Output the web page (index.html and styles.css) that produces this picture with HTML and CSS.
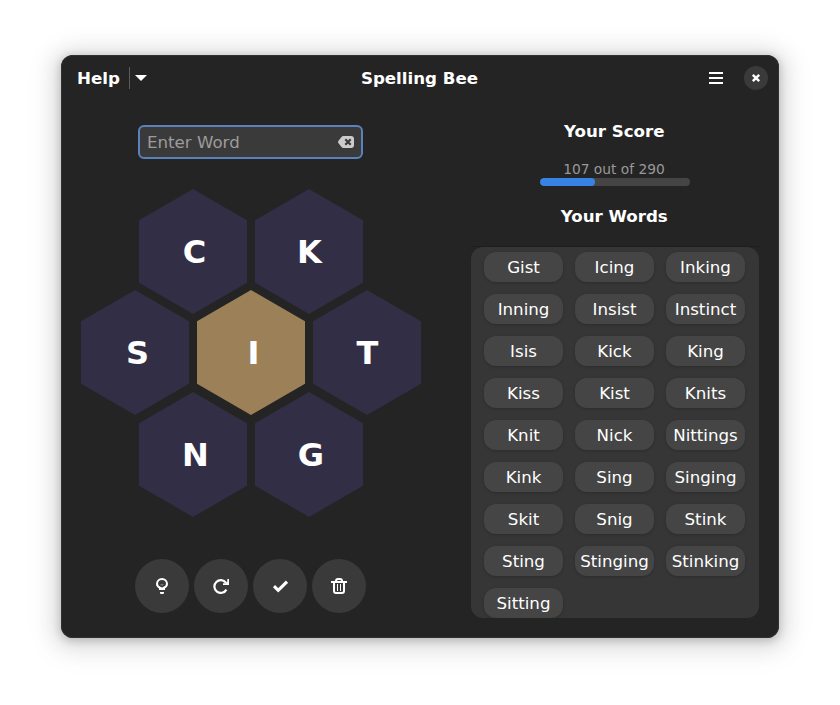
FILE: index.html
```html
<!DOCTYPE html>
<html lang="en">
<head>
<meta charset="utf-8">
<title>Spelling Bee</title>
<link rel="stylesheet" href="styles.css">
</head>
<body>
<main class="window">
  <header class="titlebar">
    <div class="help"><span class="help-label">Help</span><span class="divider"></span><svg class="caret" width="12" height="6" viewBox="0 0 12 6"><path d="M0 0h12L6 6z"/></svg></div>
    <h1>Spelling Bee</h1>
    <div class="controls">
      <svg width="14" height="12" viewBox="0 0 14 12"><path d="M0 0h14v2H0zM0 5h14v2H0zM0 10h14v2H0z"/></svg>
      <button class="close" aria-label="Close"><svg width="10" height="10" viewBox="0 0 10 10"><path class="line" d="M1.800 1.800l6.400 6.400M8.200 1.800l-6.400 6.400"/></svg></button>
    </div>
  </header>
  <div class="content">
    <section class="game">
      <div class="entry"><span>Enter Word</span><svg width="16" height="12" viewBox="0 0 16 12"><path class="clear" d="M5.500 0H13a3 3 0 0 1 3 3v6a3 3 0 0 1-3 3H5.500Q4.300 12 3.500 11L.5 7.300Q-.4 6 .5 4.700L3.500 1Q4.300 0 5.500 0z"/><path class="clear-x" d="M7.300 3.300l5.400 5.400M12.700 3.300l-5.400 5.400"/></svg></div>
      <div class="hive">
        <div class="row"><div class="hex"><span>C</span></div><div class="hex"><span class="k">K</span></div></div>
        <div class="row"><div class="hex"><span class="s">S</span></div><div class="hex center"><span class="i">I</span></div><div class="hex"><span class="t">T</span></div></div>
        <div class="row last"><div class="hex"><span class="n">N</span></div><div class="hex"><span class="g">G</span></div></div>
      </div>
      <div class="actions">
        <button aria-label="Hint"><svg width="16" height="16" viewBox="0 0 16 16"><path class="line" d="M6.500 11V10C4 8.900 3 7.700 3 6a5 5 0 0 1 10 0c0 1.700-1 2.900-3.500 4v1z"/><path d="M5 9.500h6V12H5zM6 14h4v1q0 1-1 1H7q-1 0-1-1z"/><path class="dim" d="M6 6h4L8 8z"/></svg></button>
        <button aria-label="Shuffle"><svg width="16" height="16" viewBox="0 0 16 16"><path class="line bold" d="M13 4.800A6.400 6.400 0 1 0 13.400 11.600"/><path d="M16 1v6h-6V5.200h2.600L14.300 3.500V1z"/></svg></button>
        <button aria-label="Submit"><svg width="16" height="16" viewBox="0 0 16 16"><path class="check" d="M2 8.200l4.200 4.100L15 3.700"/></svg></button>
        <button aria-label="Delete"><svg width="16" height="16" viewBox="0 0 16 16"><path class="line" d="M3 5v8q0 2 2 2h6q2 0 2-2V5M0 4h16M5 4V3q0-2 2-2h2q2 0 2 2v1"/><path d="M6 6h1v7H6zM9 6h1v7H9z"/></svg></button>
      </div>
    </section>
    <section class="results">
      <h2>Your Score</h2>
      <p class="score">107 out of 290</p>
      <div class="progress"><div class="bar"></div></div>
      <h2 class="words-title">Your Words</h2>
      <div class="list-edge">
        <ul class="words"><li>Gist</li><li>Icing</li><li>Inking</li><li>Inning</li><li>Insist</li><li>Instinct</li><li>Isis</li><li>Kick</li><li>King</li><li>Kiss</li><li>Kist</li><li>Knits</li><li>Knit</li><li>Nick</li><li>Nittings</li><li>Kink</li><li>Sing</li><li>Singing</li><li>Skit</li><li>Snig</li><li>Stink</li><li>Sting</li><li>Stinging</li><li>Stinking</li><li>Sitting</li></ul>
      </div>
    </section>
  </div>
</main>
</body>
</html>
```
FILE: styles.css
```css
* { box-sizing: border-box; }
body {
  margin: 0;
  padding: 55px 61px 0;
  height: 705px;
  overflow: hidden;
  background: #fff;
  color: #fff;
  font: 16.65px/20px "DejaVu Sans", sans-serif;
}
h1, h2, p, ul { margin: 0; padding: 0; font-size: 16.65px; line-height: 20px; text-align: center; }
svg { display: block; fill: #fff; }
button { border: 0; padding: 0; background: #3a3a3a; border-radius: 50%; display: grid; place-items: center; }
.line { fill: none; stroke: #fff; stroke-width: 2; }
.line.bold { stroke-width: 2.2; }
.window {
  width: 718px;
  height: 583px;
  border-radius: 12px;
  background: #242424;
  box-shadow: inset 0 0 0 1px #303131, 0 2px 8px 1px rgba(0,0,0,.18), 0 3px 20px 8px rgba(0,0,0,.1), 0 4px 32px 14px rgba(0,0,0,.035);
}
.titlebar { height: 46px; display: grid; grid-template-columns: 1fr auto 1fr; align-items: center; padding: 0 11px 0 16px; }
.titlebar h1 { padding: 2px 6px 0 0; }
.help { display: flex; align-items: center; font-weight: bold; }
.help-label { width: 52px; padding-top: 2px; }
.divider { width: 1px; height: 22px; background: #5c5c5c; margin-right: 5px; }
.controls { display: flex; justify-content: flex-end; align-items: center; gap: 21px; }
.close { width: 24px; height: 24px; }
.close .line { stroke-width: 2.4; }
.content { display: grid; grid-template-columns: 340px 288px; gap: 50px; padding: 0 20px; }
.game { display: flex; flex-direction: column; align-items: center; padding-top: 24px; }
.entry {
  width: 225px;
  height: 34px;
  margin-right: 1px;
  padding: 0 7px;
  border: 2px solid #5a83bd;
  border-radius: 6px;
  background: #3a3a3a;
  color: #9c9c9c;
  display: flex;
  align-items: center;
  justify-content: space-between;
}
.entry span { padding-top: 2px; }
.clear { fill: #ccc; }
.clear-x { stroke: #3a3a3a; stroke-width: 2.2; }
.hive { margin-top: 30px; }
.row { display: flex; justify-content: center; gap: 8px; }
.row + .row { margin-top: -24px; }
.row.last { margin-top: -23px; }
.hex {
  width: 108px;
  height: 125px;
  clip-path: polygon(50% 0, 100% 25%, 100% 75%, 50% 100%, 0 75%, 0 25%);
  background: #312e46;
  display: grid;
  place-items: center;
  font: bold 32px/38px "DejaVu Sans", sans-serif;
}
.hex.center { background: #9c8058; }
.hex span { padding-left: 3px; }
.hex .k, .hex .t { padding-left: 1px; }
.hex .s, .hex .i, .hex .n { padding-left: 5px; }
.hex .g { padding-left: 4px; }
.actions { display: flex; gap: 5px; margin: 42px 1px 0 0; }
.actions button { width: 54px; height: 54px; }
.check { fill: none; stroke: #fff; stroke-width: 3.1; }
.actions .dim { fill: #777; }
.results { display: flex; flex-direction: column; align-items: center; padding-top: 21px; }
.results h2 { padding-right: 1.500px; }
.score { margin-top: 18px; padding-right: 2px; color: #989898; font-size: 13.8px; line-height: 18px; }
.progress { width: 150px; height: 8px; border-radius: 4px; background: #454545; overflow: hidden; }
.bar { width: 55px; height: 8px; border-radius: 4px; background: #3584e4; }
.words-title { margin-top: 21px; }
.list-edge { width: 288px; margin-top: 19px; border-top: 1px solid #1d1d1d; }
.words {
  height: 371px;
  overflow: hidden;
  padding: 5px 13px 0;
  list-style: none;
  border-radius: 12px;
  background: #363636;
  display: grid;
  grid-template-columns: repeat(3, 79px);
  grid-auto-rows: 30px;
  gap: 12px;
  align-content: start;
}
.words li {
  padding-top: 1px;
  border-radius: 12px;
  background: #454545;
  line-height: 30px;
  white-space: nowrap;
  display: flex;
  justify-content: center;
  box-shadow: 0 1px 3px rgba(0,0,0,.2);
}
```
